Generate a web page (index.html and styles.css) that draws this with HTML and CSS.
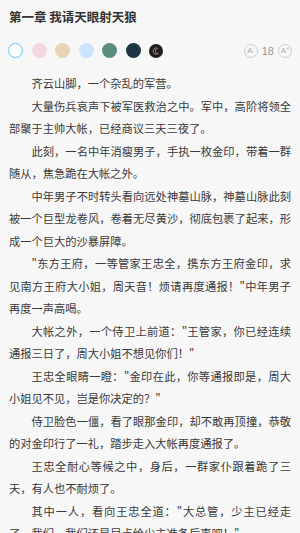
FILE: index.html
```html
<!DOCTYPE html>
<html lang="zh-CN">
<head>
<meta charset="utf-8">
<link rel="stylesheet" href="styles.css">
</head>
<body>
<div class="page">
  <h1 class="title">第一章 我请天眼射天狼</h1>
  <div class="toolbar">
    <div class="swatches">
      <span class="swatch s-white"></span>
      <span class="swatch s-pink"></span>
      <span class="swatch s-tan"></span>
      <span class="swatch s-blue"></span>
      <span class="swatch s-teal"></span>
      <span class="swatch s-navy"></span>
      <span class="swatch s-night">
        <svg viewBox="0 0 14 14" width="14" height="14">
          <circle cx="7" cy="7" r="7" fill="#241c1a"/>
          <path d="M8.6 4.2a3.2 3.2 0 1 0 0.6 5.4a2.6 2.6 0 1 1 -0.6 -5.4z" fill="none" stroke="#8a8582" stroke-width="1"/>
        </svg>
      </span>
    </div>
    <div class="fontsize">
      <span class="fbtn">A<sup>-</sup></span>
      <span class="fnum">18</span>
      <span class="fbtn">A<sup>+</sup></span>
    </div>
  </div>
  <div class="content">
    <p>齐云山脚，一个杂乱的军营。</p>
    <p>大量伤兵哀声下被军医救治之中。军中，高阶将领全部聚于主帅大帐，已经商议三天三夜了。</p>
    <p>此刻，一名中年消瘦男子，手执一枚金印，带着一群随从，焦急跪在大帐之外。</p>
    <p>中年男子不时转头看向远处神墓山脉，神墓山脉此刻被一个巨型龙卷风，卷着无尽黄沙，彻底包裹了起来，形成一个巨大的沙暴屏障。</p>
    <p>"东方王府，一等管家王忠全，携东方王府金印，求见南方王府大小姐，周天音！烦请再度通报！"中年男子再度一声高喝。</p>
    <p>大帐之外，一个侍卫上前道："王管家，你已经连续通报三日了，周大小姐不想见你们！"</p>
    <p>王忠全眼睛一瞪："金印在此，你等通报即是，周大小姐见不见，岂是你决定的？"</p>
    <p>侍卫脸色一僵，看了眼那金印，却不敢再顶撞，恭敬的对金印行了一礼，踏步走入大帐再度通报了。</p>
    <p>王忠全耐心等候之中，身后，一群家仆跟着跪了三天，有人也不耐烦了。</p>
    <p>其中一人，看向王忠全道："大总管，少主已经走了，我们，我们还是早点给少主准备后事吧！"</p>
  </div>
</div>
</body>
</html>
```
FILE: styles.css
```css
html, body {
  margin: 0;
  padding: 0;
  background: #f7f7f7;
}
body {
  font-family: "Noto Sans CJK SC", "Noto Sans", sans-serif;
  color: #3a3a3a;
  overflow: hidden;
  height: 533px;
}
.page {
  padding: 0 9px;
}
.title {
  margin: 0;
  font-size: 12.5px;
  font-weight: bold;
  line-height: 34px;
  color: #333;
}
.toolbar {
  margin-top: 6px;
  height: 21px;
  display: flex;
  align-items: center;
  justify-content: space-between;
}
.swatches {
  display: flex;
  align-items: center;
  gap: 8.5px;
  margin-left: -1px;
}
.swatch {
  display: block;
  width: 15px;
  height: 15px;
  border-radius: 50%;
  box-sizing: border-box;
}
.s-white { background: #fff; border: 1px solid #6cc3ef; }
.s-pink { background: #f3d6e0; }
.s-tan { background: #e9d3b5; }
.s-blue { background: #cbe4fb; }
.s-teal { background: #5b8c80; }
.s-navy { background: #1e3443; }
.s-night { width: 14px; height: 14px; }
.s-night svg { display: block; }
.fontsize {
  display: flex;
  align-items: center;
  gap: 3px;
  margin-right: -1px;
}
.fbtn {
  width: 14px;
  height: 14px;
  border: 1px solid #cfcfcf;
  border-radius: 50%;
  box-sizing: border-box;
  display: flex;
  align-items: center;
  justify-content: center;
  font-family: "Liberation Sans", sans-serif;
  font-size: 8px;
  color: #aaa;
  line-height: 1;
}
.fbtn sup {
  font-size: 5px;
  line-height: 1;
  margin-top: -4px;
}
.fnum {
  font-family: "Liberation Sans", sans-serif;
  font-size: 11px;
  color: #999;
  padding: 0 1px;
}
.content {
  margin-top: 11px;
}
.content p {
  margin: 0;
  font-size: 11.25px;
  line-height: 22.5px;
  text-indent: 2em;
  text-align: justify;
}
```
